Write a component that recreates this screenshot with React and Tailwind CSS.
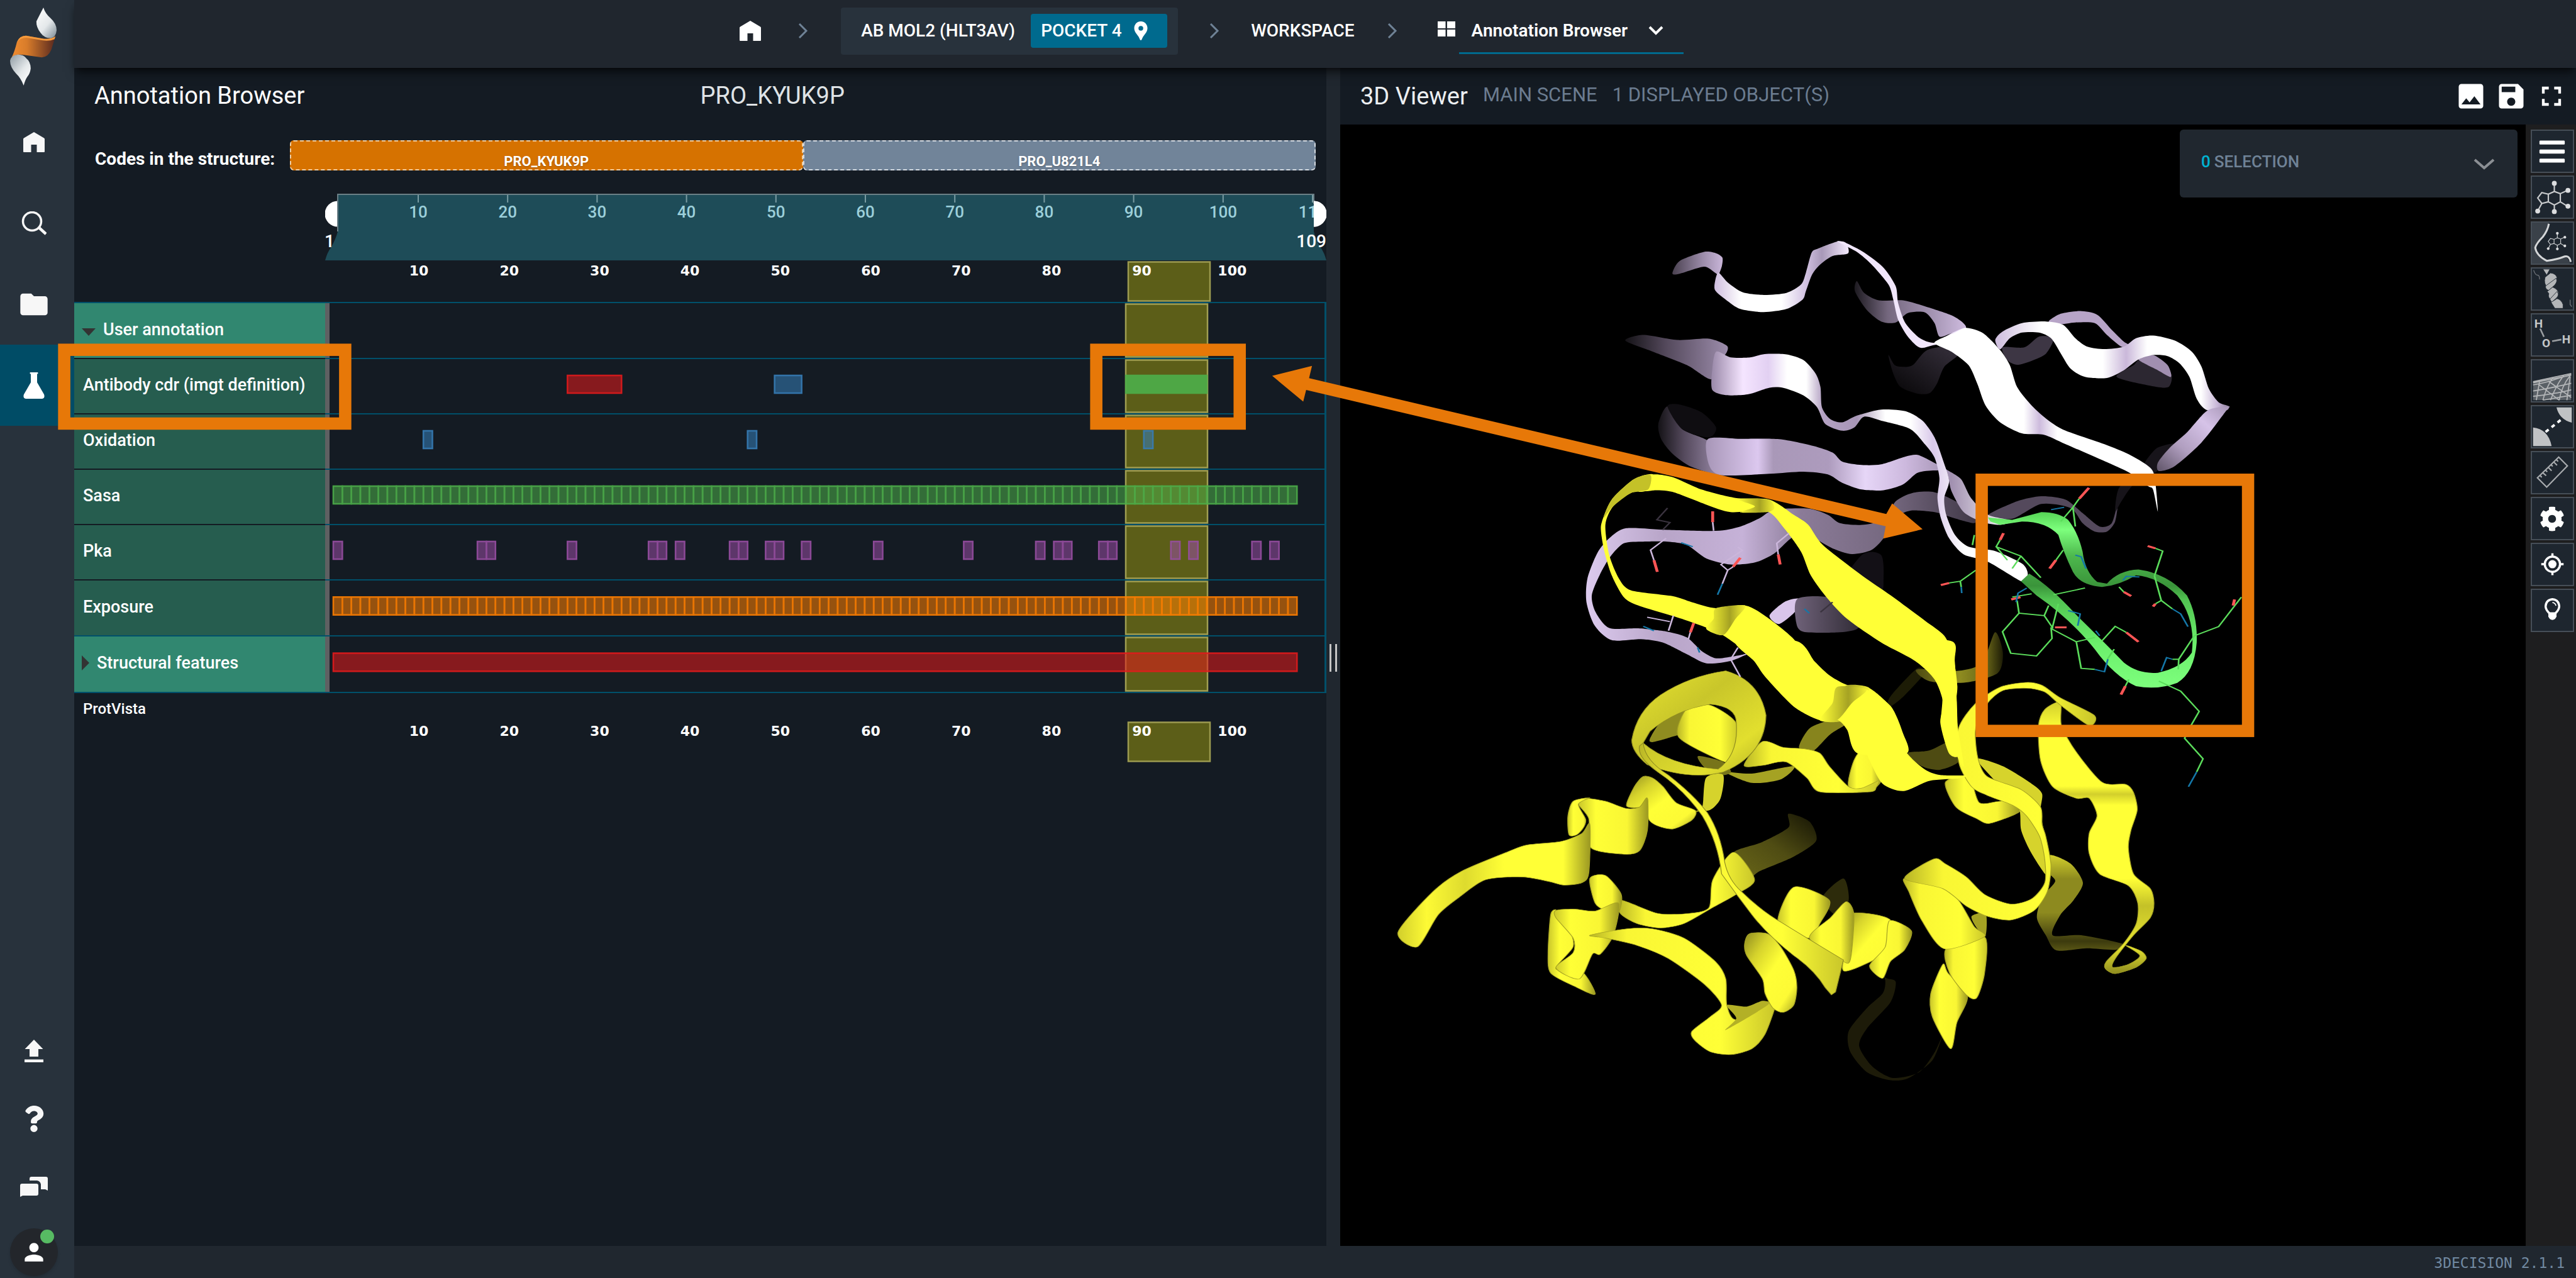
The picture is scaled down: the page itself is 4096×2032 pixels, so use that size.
import React, { useState } from 'react';
import { MdFolder, MdImage, MdSave, MdFullscreen, MdPerson, MdLocationPin } from 'react-icons/md';
import { FaBars, FaCog, FaQuestion } from 'react-icons/fa';

const RES = 14.32;
const residues = Array.from({ length: 107 }, (_, i) => [i, i + 1]);
const single = (list) => list.map((i) => [i, i + 1]);

const tracks = [
  { label: 'User annotation', group: true, open: true, height: 'h-[89px]', features: [] },
  {
    label: 'Antibody cdr (imgt definition)',
    height: 'h-[88px]',
    features: [
      { color: '#e41a1c', spans: [[26, 32]] },
      { color: '#377eb8', spans: [[49, 52]] },
      { color: '#4daf4a', spans: [[88, 97]], solid: true },
    ],
  },
  { label: 'Oxidation', height: 'h-[88px]', features: [{ color: '#377eb8', spans: single([10, 46, 90]) }] },
  { label: 'Sasa', height: 'h-[88px]', features: [{ color: '#4daf4a', spans: residues }] },
  {
    label: 'Pka',
    height: 'h-[88px]',
    features: [
      {
        color: '#984ea3',
        spans: single([0, 16, 17, 26, 35, 36, 38, 44, 45, 48, 49, 52, 60, 70, 78, 80, 81, 85, 86, 93, 95, 102, 104]),
      },
    ],
  },
  { label: 'Exposure', height: 'h-[89px]', features: [{ color: '#ff7f00', spans: residues }] },
  { label: 'Structural features', group: true, height: 'h-[90px]', features: [{ color: '#e41a1c', spans: [[0, 107]] }] },
];

// closed smooth outline through a list of points
const smooth = (str) => {
  const n = str.trim().split(/[\s,]+/).map(Number);
  const p = [];
  for (let i = 0; i < n.length; i += 2) p.push([n[i], n[i + 1]]);
  const at = (i) => p[(i + p.length) % p.length];
  const k = 0.13;
  let d = `M${p[0][0]} ${p[0][1]}`;
  for (let i = 0; i < p.length; i++) {
    const [a, b, c, e] = [at(i - 1), at(i), at(i + 1), at(i + 2)];
    d += `C${b[0] + (c[0] - a[0]) * k} ${b[1] + (c[1] - a[1]) * k} ${c[0] - (e[0] - b[0]) * k} ${c[1] - (e[1] - b[1]) * k} ${c[0]} ${c[1]}`;
  }
  return d + 'Z';
};

const lilacRibbons = [
  ['690,175 705,210 735,232 785,232 830,250 890,280 915,312 885,330 860,340 850,300 830,268 795,270 770,298 740,295 710,260 686,205', 'url(#lilacFade)'],
  ['755,395 768,425 785,430 805,425 835,380 885,368 900,392 870,430 855,480 840,508 815,510 780,490 765,450', 'url(#lilacBlack)'],
  ['990,372 1035,372 1065,340 1095,345 1080,390 1050,412 1020,424 1000,410', '#3d3644'],
  ['1225,460 1260,425 1275,410 1335,445 1332,490 1290,485', '#2c2731'],
  ['1270,408 1300,395 1330,425 1337,460 1310,440', '#a18fb0'],
  ['1085,295 1110,272 1150,264 1185,275 1215,320 1240,355 1255,368 1235,370 1205,335 1180,300 1140,298 1105,304', '#b7a4c7'],
  ['960,872 1020,830 1070,815 1120,825 1155,865 1190,905 1215,895 1228,830 1222,890 1205,920 1180,920 1155,895 1130,850 1070,838 1010,882', '#54495c'],
  ['1222,860 1230,790 1270,740 1290,700 1310,670 1345,660 1320,720 1300,750 1260,780 1235,830', '#17141a'],
  ['700,990 740,990 745,1060 735,1110 650,1130 640,1110', '#131016'],
  ['510,1170 540,1130 570,1120 565,1155 530,1195', '#d9c5ea'],
  ['568,1120 640,1118 700,1180 690,1210 650,1220 580,1218 565,1190', 'url(#lilacDeep)'],
  ['180,940 215,910 300,915 400,918 450,905 490,880 520,855 590,852 630,870 655,895 700,900 745,885 770,830 805,805 850,803 900,835 935,880 930,895 890,880 850,862 800,858 770,880 745,940 720,975 680,987 640,970 600,940 560,935 520,985 480,1012 430,1018 380,1000 340,960 300,950 250,950 210,955 182,995 160,1050 144,1110 152,1160 180,1207 240,1208 300,1218 340,1235 370,1275 400,1297 440,1290 462,1285 430,1305 380,1312 340,1285 290,1250 245,1240 185,1243 150,1200 133,1130 135,1060 155,985', 'url(#lilacMid)'],
  ['300,548 330,615 383,650 390,700 412,752 350,728 310,688 287,645 281,600', 'url(#lilacDark)'],
  ['300,548 325,542 370,565 400,610 385,640 330,615', '#0f0d11'],
  ['383,645 450,644 530,645 600,665 640,685 660,712 700,722 740,720 790,697 815,692 845,712 880,740 905,765 925,820 960,870 1010,888 985,900 950,892 910,862 885,800 875,745 850,738 815,745 785,780 745,797 700,795 660,775 630,750 580,742 510,748 410,752 385,720', 'url(#lilacBar)'],
  ['213,352 250,335 320,350 385,346 423,368 418,395 400,405 390,467 340,425 270,385', 'url(#lilacDark)'],
  ['400,385 430,402 470,402 500,392 545,393 580,410 605,450 615,490 618,550 635,585 660,595 690,575 740,557 790,562 825,590 850,640 868,710 880,770 870,820 874,870 892,930 920,965 975,978 1030,1015 1042,1045 1032,1070 960,1010 910,988 880,940 863,880 856,820 860,760 850,700 830,660 800,615 745,592 705,578 685,610 660,620 625,600 608,550 580,515 540,493 510,492 465,512 420,514 392,498 392,440', 'url(#whiteA)'],
  ['310,152 325,115 375,88 400,92 413,105 412,130 405,155 398,150 375,132 325,153', 'url(#lilacDark2)'],
  ['405,150 425,180 455,208 498,216 545,210 575,185 585,150 597,90 610,78 650,57 668,62 672,92 640,100 615,125 598,155 585,205 578,230 545,258 498,267 450,258 420,230 398,202 398,175', 'url(#whiteB)'],
  ['650,57 668,62 705,90 745,135 770,190 775,240 790,300 820,345 850,358 885,330 915,314 905,350 850,365 820,373 795,340 775,290 765,230 755,185 720,125 690,88', '#f1e6fb'],
  ['850,358 890,330 915,314 950,330 985,380 1005,425 1020,490 1050,545 1085,590 1120,620 1200,660 1250,690 1290,725 1303,755 1310,860 1300,795 1290,785 1255,748 1215,720 1120,660 1075,632 1030,628 985,595 955,545 938,480 920,425 885,385', 'url(#whiteC)'],
  ['975,350 990,325 1030,300 1080,295 1115,305 1140,345 1165,370 1200,377 1240,370 1265,345 1300,337 1345,352 1380,385 1400,430 1415,495 1435,535 1456,547 1450,560 1410,558 1390,525 1375,460 1355,420 1330,398 1300,395 1270,408 1240,440 1205,463 1160,460 1130,435 1110,390 1090,345 1065,328 1030,328 1005,345 985,378', 'url(#whiteD)'],
  ['1456,548 1450,562 1400,655 1345,725 1312,740 1310,715 1335,670 1370,625 1412,560', 'url(#lilacTurn)'],
];

const yellowUpper = [
  ['240,800 265,752 310,758 370,795 440,820 510,825 560,870 590,900 620,960 700,1050 760,1110 830,1185 870,1230 888,1290 897,1380 893,1450 902,1580 880,1580 862,1490 868,1430 850,1360 810,1305 740,1250 670,1180 630,1120 595,1050 575,980 540,910 505,860 430,862 380,840 310,802 270,797', '#ffff36'],
  ['270,750 230,765 185,825 165,890 163,920 170,980 185,1050 210,1115 240,1140 330,1180 410,1225 470,1290 500,1350 560,1440 615,1478 650,1480 670,1510 692,1580 792,1580 785,1520 760,1440 710,1390 660,1380 610,1340 560,1240 500,1170 460,1140 400,1148 350,1130 310,1112 225,1095 200,1060 180,990 172,900 188,845 225,805 275,795', '#ffff36'],
];

const yellowUpperShade = [
  ['445,824 508,825 520,850 505,862 450,863 480,845', 'url(#yFold)'],
  ['400,1148 460,1140 440,1180 415,1228 380,1210 395,1180', 'url(#yFold)'],
  ['650,1382 710,1390 680,1430 650,1480 615,1478 640,1430', 'url(#yFold)'],
  ['265,752 230,765 185,825 168,880 188,845 225,805 260,795', '#c4c128'],
];

const yellowLower = [
  ['980,220 985,180 1035,85 1050,100 1010,180', '#1d1c06'],
  ['1035,88 1115,92 1160,65 1185,-40 1200,30 1190,100 1130,132 1060,128', 'url(#oliveUp)'],
  ['1018,375 1060,365 1118,320 1118,400 1080,432 1045,420', '#4e4b12'],
  ['790,583 830,610 843,675 800,730 735,780 715,805 690,780 685,715 740,680 790,630', 'url(#oliveFade)'],
  ['895,805 905,880 880,930 855,870', '#2d2b0b'],
  ['965,1110 975,1145 995,1160 985,1230 940,1320 925,1380 950,1450 990,1490 1040,1470 1070,1400 1085,1340 1065,1430 1020,1490 985,1498 940,1470 908,1400 905,1330 940,1250 970,1200 975,1155', '#1d1b09'],
  ['1290,725 1330,755 1353,820 1335,880 1310,930 1295,1000 1350,1000 1430,1030 1415,1050 1360,1045 1302,1052 1282,1000 1265,940 1275,870 1300,815 1285,780', 'url(#oliveDown)'],
  ['1090,475 1110,560 1150,600 1175,616 1232,575 1200,540 1155,545 1135,455', 'url(#yEdge)'],
  ['1150,395 1200,420 1255,480 1275,515 1272,580 1285,700 1287,800 1255,720 1235,640 1230,560 1190,480', '#d6d32c'],
  ['810,355 830,290 870,262 905,268 870,310 835,370', '#87841d'],
  ['670,440 720,445 800,420 775,465 720,477', '#a5a223'],
  ['617,385 665,405 680,440 660,450 630,425', '#77741a'],
  ['905,490 915,400 935,355 950,400 968,465 945,505', 'url(#yEdge)'],
  ['740,335 780,355 820,360 850,375 868,420 905,490 930,495 962,470 958,492 945,508 850,508 825,460 785,405 740,417 705,417', 'url(#yGlow)'],
  ['665,450 660,530 640,570 608,575 625,560 632,460', '#d6d32c'],
  ['480,555 495,490 512,455 530,460 550,490 575,545 612,572 605,605 570,635 540,625 522,600 520,530 505,560', 'url(#yCoil)'],
  ['400,530 440,540 480,565 505,560 520,530 520,640 505,710 475,722 412,700 408,600 388,550', 'url(#yEdge)'],
  ['370,655 368,590 378,540 410,528 388,550 402,602 398,630 385,655', 'url(#yEdge)'],
  ['43,990 80,1040 120,930 160,870 210,810 280,800 330,815 360,828 395,820 408,785 410,620 395,650 355,678 290,690 255,712 165,780 110,850', 'url(#yTail)'],
  ['525,325 550,260 605,218 590,300 565,320 530,337', '#8f8c20'],
  ['580,320 597,218 640,210 690,272 692,390 672,408', 'url(#yGlow)'],
  ['685,715 725,810 690,860 645,905 590,960 545,975 500,960 468,925 470,880 540,925 600,925 638,905 645,810', 'url(#yGlow)'],
  ['410,805 440,795 470,860 465,920 440,915 420,890', 'url(#yEdge)'],
  ['345,912 335,930 330,1060 335,1130 380,1175 420,1203 395,1125 345,1115 378,1040 370,980 345,930', 'url(#yEdge)'],
  ['345,915 380,910 420,917 465,890 455,1000 430,1065 415,1065 390,1150 345,1112 378,1060 378,1010 345,940', 'url(#yEdge)'],
  ['410,1000 480,978 530,978 590,1010 650,1090 670,1150 672,1240 690,1290 755,1225 765,1240 745,1340 720,1390 680,1410 640,1400 610,1360 605,1330 640,1280 662,1240 630,1170 560,1080 500,1035 440,1010', 'url(#yGlow)'],
  ['672,1240 690,1285 670,1325 750,1240 740,1225 710,1245', '#b3b026'],
  ['715,995 750,995 775,1040 800,1120 806,1180 800,1240 780,1265 760,1250 745,1200 740,1150 710,1070 706,1030', 'url(#yCoil)'],
  ['800,835 868,880 850,960 830,1010 770,960', 'url(#yEdge)'],
  ['912,925 985,948 978,1060 960,1080 895,1122 905,1000', 'url(#yCoil)'],
  ['983,950 1025,985 1012,1050 985,1090 970,1148 945,1105 975,1040', 'url(#yEdge)'],
  ['830,1010 870,940 900,885 915,930 908,1085 890,1085', 'url(#yEdge)'],
  ['1310,200 1280,225 1268,280 1272,400 1295,490 1340,530 1365,530 1380,590 1365,650 1365,720 1385,790 1440,830 1458,890 1455,960 1430,1030 1398,1090 1396,1115 1415,1132 1455,1110 1474,1080 1465,1055 1435,1035 1462,1070 1440,1100 1410,1110 1415,1080 1450,1000 1482,940 1489,890 1482,840 1450,790 1440,700 1445,640 1457,570 1450,510 1435,482 1390,475 1340,370 1312,280', 'url(#yArrow)'],
  ['1085,1100 1062,1200 1065,1280 1100,1390 1112,1300 1132,1210 1095,1130', 'url(#yEdge)'],
  ['1140,935 1167,925 1167,1000 1150,975', '#a5a223'],
  ['1092,1045 1165,1006 1165,1130 1150,1215 1130,1205 1098,1130', 'url(#yGlow)'],
  ['1012,805 1020,850 1045,950 1088,1047 1165,1005 1145,970 1115,880 1080,835', 'url(#yGlow)'],
  ['1375,245 1310,185 1275,142 1245,132 1195,148 1147,205 1115,290 1116,410 1140,490 1170,520 1220,555 1245,590 1270,660 1280,740 1280,820 1255,875 1215,893 1165,860 1130,800 1090,755 1068,738 1012,805 1085,840 1130,900 1170,935 1215,948 1260,915 1285,850 1292,760 1282,660 1275,620 1272,560 1235,500 1170,455 1152,390 1148,290 1170,205 1200,160 1245,152 1280,165 1310,210 1365,280', 'url(#yGlow)'],
  ['985,-10 1101,-10 1108,60 1112,200 1114,290 1125,420 1105,360 1082,280 1083,160 1045,60', '#ffff36'],
  ['690,-10 805,-10 840,60 870,110 905,143 945,152 985,215 1000,280 1015,370 1050,430 1080,450 1130,452 1115,462 1060,470 1010,505 970,480 945,400 925,310 895,265 850,262 800,215 760,130 725,60', '#ffff36'],
  ['900,143 945,152 912,215 892,265 850,262 880,210', 'url(#yFold)'],
];

const ring =
  'M670 92Q735 125 747 245Q745 380 665 440Q600 470 520 415Q490 370 490 330Q500 230 545 175Q600 110 670 92ZM690 270Q690 215 640 207Q575 225 525 300L512 340Q560 415 655 430Q695 380 690 270Z';

const greenRibbon =
  'M960 878L1010 885L1070 862Q1105 862 1125 885Q1145 920 1155 980Q1160 1040 1185 1070L1205 1075Q1230 1035 1270 1033Q1330 1045 1370 1110Q1392 1170 1390 1250Q1385 1340 1350 1370Q1310 1392 1265 1380Q1220 1350 1180 1270Q1130 1180 1060 1110L1028 1068L1045 1045Q1090 1085 1140 1165Q1200 1250 1240 1310Q1270 1345 1310 1340Q1360 1325 1380 1280Q1388 1180 1350 1110Q1310 1055 1265 1050Q1230 1080 1195 1085Q1150 1080 1135 1040Q1115 980 1105 930Q1080 890 1030 890L985 900L965 890Z';

const sticks = [
  ['#5bdc5b', '1148,822 1135,848 1110,890M1135,848 1140,905M985,945 977,965 1028,993 1069,1057M1028,993 1010,1030M977,965 1000,1005M935,1035 903,1068 880,1073M903,1068 905,1085M932,930 928,960M1115,975 1100,1005M1020,1125 1024,1163 1076,1170 1094,1208M1024,1163 990,1218 1007,1282 1060,1290 1092,1238 1090,1205M1105,1135 1092,1210 1142,1248 1152,1327 1180,1330M1142,1248 1180,1235M1076,1170 1085,1140M1195,1245 1222,1202 1245,1220M1303,1052 1320,978 1305,970M1303,1052 1317,1125 1340,1150M1317,1125 1305,1135M1095,1108 1160,1088M1010,1115 1050,1105M1230,1085 1240,1100M1482,1115 1435,1203 1385,1230 1353,1300 1340,1300M1353,1300 1352,1330M1250,1360 1243,1380M1312,1365 1357,1395 1395,1455 1375,1505 1365,1535 1403,1596 1390,1635M1206,1300 1220,1270'],
  ['#ff5555', '1168,790 1148,822M992,925 985,945M880,1073 863,1079M1100,1005 1087,1030M1305,970 1289,963M1305,1135 1300,1143M1027,1115 1008,1122M1122,1205 1098,1205M1245,1220 1270,1248M1240,1100 1255,1112M1243,1380 1234,1405M1465,1140 1468,1122M272,1005 279,1040M393,860 393,892M450,998 435,1025M528,988 532,1018M354,1192 347,1220'],
  ['#1477a8', '1090,855 1117,848M905,1085 906,1103M1140,990 1152,995 1162,1030M1238,1065 1245,1053 1272,1055M1340,1150 1357,1165 1372,1203M1340,1300 1328,1295 1317,1335M1180,1330 1200,1337 1207,1300M1125,1155 1150,1165 1145,1200M1018,1130 1022,1103 1040,1088M413,1075 403,1108M328,953 352,965M250,1202 272,1215M582,1150 592,1163M362,1265 366,1280M1182,1215 1190,1230M1390,1635 1373,1679'],
  ['#cbb6db', '430,1300 450,1352M430,1300 445,1265M430,1300 462,1285M413,1075 424,1035 410,1018 454,976 445,966M424,1035 435,1025M272,1005 265,975 297,940M393,892 395,917M528,988 525,955 550,925M302,1215 312,1170M258,1175 305,1188M347,1220 343,1240'],
  ['#3a333f', '300,850 278,885 305,893 290,915M640,1130 615,1160'],
];

const HomeGlyph = ({ className }) => (
  <svg viewBox="0 0 34 32" className={className} fill="currentColor">
    <path d="M17 0 33 9.500Q34 10 34 11V31Q34 32 33 32H21.500V20H12.500V32H1Q0 32 0 31V11Q0 10 1 9.500Z" />
  </svg>
);

const Chevron = () => (
  <svg viewBox="0 0 16 24" className="h-6 w-4" fill="none" stroke="#6f8296" strokeWidth="3">
    <path d="M2 1 13 12 2 23" />
  </svg>
);

const Logo = () => (
  <svg viewBox="0 0 205 282" className="h-[124px] w-[74px]" preserveAspectRatio="none">
    <defs>
      <linearGradient id="lgOrange">
        <stop offset="0" stopColor="#f08c30" />
        <stop offset="0.35" stopColor="#d87c2a" />
        <stop offset="1" stopColor="#57281f" />
      </linearGradient>
      <linearGradient id="lgTop" x1="0" y1="0" x2="0.8" y2="1">
        <stop offset="0" stopColor="#fff" />
        <stop offset="0.6" stopColor="#e4e8ea" />
        <stop offset="1" stopColor="#8e9ba3" />
      </linearGradient>
      <linearGradient id="lgBottom" x1="0" y1="0" x2="0.8" y2="1">
        <stop offset="0" stopColor="#8e9ba3" />
        <stop offset="0.6" stopColor="#e4e8ea" />
        <stop offset="1" stopColor="#fff" />
      </linearGradient>
    </defs>
    <path d="M6 182Q20 160 30 125Q42 102 70 102L150 113Q180 115 200 104Q190 130 182 152Q168 180 140 180L60 171Q25 166 6 182Z" fill="url(#lgOrange)" />
    <path d="M30 125Q42 102 70 102L150 113Q180 115 200 104L196 114Q175 122 145 119L72 109Q46 109 30 125Z" fill="#f59a3c" />
    <path d="M147 0Q155 22 178 38Q205 58 205 82Q202 108 180 111Q150 110 135 92Q115 72 116 50Q125 35 147 0Z" fill="url(#lgTop)" />
    <path d="M60 282Q48 255 26 238Q0 215 0 192Q5 172 35 170Q60 170 72 184Q90 195 91 220Q88 240 76 250Q66 262 60 282Z" fill="url(#lgBottom)" />
  </svg>
);

const sideItems = [
  { name: 'Home', icon: <HomeGlyph className="h-8 w-[34px]" /> },
  {
    name: 'Search',
    icon: (
      <svg viewBox="0 0 40 38" className="h-[38px] w-10" fill="none" stroke="currentColor" strokeWidth="3.500">
        <circle cx="17" cy="16" r="14.500" />
        <path d="M27 25 39 36" strokeWidth="4.500" />
      </svg>
    ),
  },
  { name: 'Projects', icon: <MdFolder className="size-[52px]" /> },
  {
    name: 'Workspace',
    active: true,
    icon: (
      <svg viewBox="0 0 34 42" className="h-[42px] w-[34px]" fill="currentColor">
        <path d="M11 0H23Q24 1 23 2.500H22V16L33 35Q35 41 30 42H4Q-1 41 1 35L12 16V2.500H11Q10 1 11 0Z" />
      </svg>
    ),
  },
];

const bottomItems = [
  {
    name: 'Upload',
    icon: (
      <svg viewBox="0 0 30 36" className="h-9 w-[30px]" fill="currentColor">
        <path d="M15 0 29.500 15H22V27H8V15H0.500ZM0 31.500H30V36H0Z" />
      </svg>
    ),
  },
  { name: 'Help', icon: <FaQuestion className="size-[42px]" /> },
  {
    name: 'Chat',
    icon: (
      <svg viewBox="0 0 44 32" className="h-8 w-11" fill="currentColor">
        <path d="M3 11H26Q29 11 29 14V27Q29 30 26 30H4L0 32V14Q0 11 3 11Z" />
        <path d="M15 6V3Q15 0 18 0H41Q44 0 44 3V22L40 20H33V12Q32 7 27 6Z" />
      </svg>
    ),
  },
];

function Sidebar() {
  return (
    <aside className="flex w-[118px] shrink-0 flex-col bg-[#28323c] text-[#f7f7f7]">
      <div className="flex h-[161px] pl-4 pt-3">
        <Logo />
      </div>
      <nav className="flex flex-col">
        {sideItems.map((item) => (
          <button
            key={item.name}
            aria-label={item.name}
            className={`flex h-[129px] items-center justify-center pr-2.5 ${item.active ? 'bg-[#004c66] text-white' : ''}`}
          >
            {item.icon}
          </button>
        ))}
      </nav>
      <div className="mt-auto flex flex-col">
        {bottomItems.map((item) => (
          <button key={item.name} aria-label={item.name} className="flex h-[108px] items-center justify-center pr-2.5">
            {item.icon}
          </button>
        ))}
        <div className="flex h-[91px] items-center pl-4 pt-2">
          <button
            aria-label="Account"
            className="relative flex size-[76px] items-center justify-center rounded-full bg-[#23262b] text-white shadow-md"
          >
            <MdPerson className="size-11" />
            <span className="absolute right-1.5 top-0.5 size-[22px] rounded-full bg-[#57bb63]" />
          </button>
        </div>
      </div>
    </aside>
  );
}

function TopBar() {
  return (
    <header className="relative z-10 flex h-[108px] shrink-0 items-center bg-[#20262e] pb-2.5 pl-[26.6%] text-[28px] leading-9 font-medium text-white shadow-lg shadow-black/60">
      <a href="#home" aria-label="Home">
        <HomeGlyph className="h-[34px] w-[34px]" />
      </a>
      <div className="ml-[59px]">
        <Chevron />
      </div>
      <div className="ml-[52px] flex h-[75px] w-[536px] items-center justify-between rounded bg-[#28323c] pl-8 pr-[17px]">
        <span>AB MOL2 (HLT3AV)</span>
        <button className="flex h-[54px] w-[217px] items-center justify-between rounded bg-[#006a8e] pl-4 pr-7">
          POCKET 4
          <MdLocationPin className="-mr-1 size-9" />
        </button>
      </div>
      <div className="ml-[50px]">
        <Chevron />
      </div>
      <a href="#workspace" className="ml-[50px]">
        WORKSPACE
      </a>
      <div className="ml-[52px]">
        <Chevron />
      </div>
      <svg viewBox="0 0 28 24" className="mb-1.5 ml-16 h-6 w-7" fill="#fff">
        <path d="M0 0H12.500V11H0ZM15 0H28V11H15ZM0 13H12.500V24H0ZM15 13H28V24H15Z" />
      </svg>
      <button className="ml-1.5 mt-2.5 flex h-16 w-[357px] items-center justify-between border-b-[3px] border-[#006a8e] pb-2 pl-5 pr-8 font-semibold">
        Annotation Browser
        <svg viewBox="0 0 24 16" className="h-4 w-6" fill="none" stroke="#fff" strokeWidth="4">
          <path d="M2 2 12 12 22 2" />
        </svg>
      </button>
    </header>
  );
}

function Navigator() {
  const ticks = [10, 20, 30, 40, 50, 60, 70, 80, 90, 100, 110];
  return (
    <svg viewBox="0 0 1592 106" className="block h-auto w-full">
      <clipPath id="navClip">
        <rect x="20" y="0" width="1552" height="60" />
      </clipPath>
      <circle cx="20" cy="32" r="20.500" fill="#fff" />
      <circle cx="1572" cy="32" r="20.500" fill="#fff" />
      <path d="M20 0H1572V60Q1575 72 1582 84Q1589 94 1592 106H0Q3 94 10 84Q17 72 20 60Z" fill="#1e4c58" />
      <path d="M20 60V1H1572V16" fill="none" stroke="#6b7f86" strokeWidth="2" />
      <g clipPath="url(#navClip)" textAnchor="middle" className="fill-[#9ccfda] text-[26px] font-medium">
        {ticks.map((t) => (
          <g key={t}>
            <path d={`M${148 + (t - 10) * 14.22} 2V14`} stroke="#7a9ca3" strokeWidth="2" />
            <text x={148 + (t - 10) * 14.22} y="38">
              {t}
            </text>
          </g>
        ))}
      </g>
      <path d="M1572 11.500A20.500 20.500 0 0 1 1572 52.500Z" fill="#fff" />
      <text x="-1" y="85" className="fill-white text-[28px] font-medium">
        1
      </text>
      <text x="1592" y="85" textAnchor="end" className="fill-white text-[28px] font-medium">
        109
      </text>
    </svg>
  );
}

function Ruler() {
  return (
    <svg viewBox="0 0 1592 66" className="block h-auto w-full">
      <rect x="1277" y="2.500" width="130" height="62" fill="#5c5e18" stroke="#9c9b50" strokeWidth="2.500" />
      <g textAnchor="middle" className="fill-white font-['DejaVu_Sans'] text-[22px] font-bold">
        {[10, 20, 30, 40, 50, 60, 70, 80, 90, 100].map((t) => (
          <text key={t} x={149 + (t - 10) * 14.37} y="24">
            {t}
          </text>
        ))}
      </g>
    </svg>
  );
}

function Track({ track }) {
  const { label, group, open, height, features } = track;
  return (
    <div className={`flex ${height}`}>
      <div
        className={`flex w-[399px] shrink-0 items-center border-t-2 pb-1 text-[27px] font-medium text-white ${
          group ? 'border-[#00506a] bg-[#318770] pl-3' : 'border-[#141b23] bg-[#265d4f] pl-3.5'
        }`}
      >
        {group && (
          <button aria-label={`Toggle ${label}`} className="mr-3 text-[#333]">
            {open ? (
              <svg viewBox="0 0 22 12" className="mt-2 h-3 w-[22px]" fill="currentColor">
                <path d="M0 0H22L11 12Z" />
              </svg>
            ) : (
              <svg viewBox="0 0 12 24" className="h-6 w-3" fill="currentColor">
                <path d="M0 0 12 12 0 24Z" />
              </svg>
            )}
          </button>
        )}
        <span>{label}</span>
      </div>
      <div className="w-[7px] shrink-0 border-t-2 border-[#00506a] bg-[#5f6062]" />
      <div className="min-w-0 flex-1 border-t-2 border-[#00506a]">
        <svg viewBox="0 0 1582 86" preserveAspectRatio="none" className="block h-full w-full">
          <rect x="1266" y="1.500" width="130" height="83" fill="#5c5e18" stroke="#a09f52" strokeWidth="2.500" />
          {features.map((f) => (
            <g key={f.color} fill={f.color} stroke={f.color} strokeWidth="2.600" opacity="0.9">
              {f.spans.map(([a, b]) => (
                <rect
                  key={a}
                  x={6 + a * RES}
                  y="26"
                  width={(b - a) * RES}
                  height="28"
                  fillOpacity={f.solid ? 1 : 0.62}
                />
              ))}
            </g>
          ))}
        </svg>
      </div>
    </div>
  );
}

function AnnotationPanel() {
  return (
    <section className="min-w-0 bg-[#141b23] text-[28px] leading-9 text-white">
      <div className="grid h-[88px] grid-cols-2 items-center text-[38px]">
        <h2 className="pl-8">Annotation Browser</h2>
        <h2 className="text-[#dfe3e6]">PRO_KYUK9P</h2>
      </div>
      <div className="mt-[27px] flex items-end pl-[33px] pr-[17px]">
        <span className="w-[310px] shrink-0 font-bold">Codes in the structure:</span>
        <button className="flex h-12 flex-1 items-end justify-center rounded-md border-2 border-dashed border-[#f0cfa4] bg-[#d67200] text-[22px] leading-6 font-bold text-shadow-md">
          PRO_KYUK9P
        </button>
        <button className="flex h-12 flex-1 items-end justify-center rounded-md border-2 border-dashed border-[#d5dbe2] bg-[#718499] text-[22px] leading-6 font-bold text-shadow-md">
          PRO_U821L4
        </button>
      </div>
      <div className="mt-[37px] pl-[399px]">
        <Navigator />
        <Ruler />
      </div>
      <div className="border-b-2 border-r-[3px] border-[#00506a]">
        {tracks.map((t) => (
          <Track key={t.label} track={t} />
        ))}
      </div>
      <div className="flex h-11 items-center pl-3.5 pt-1.5 text-[24px] font-medium">ProtVista</div>
      <div className="pl-[399px]">
        <Ruler />
      </div>
    </section>
  );
}

const Stops = ({ list }) => list.map(([o, c]) => <stop key={o} offset={o} stopColor={c} />);

function Molecule() {
  return (
    <svg viewBox="2290 213 2024 1915" className="absolute inset-0 h-full w-full" role="img" aria-label="Main scene">
      <defs>
        <linearGradient id="lilacFade"><Stops list={[[0, '#1d1a20'], [0.3, '#75687f'], [0.7, '#a494b3'], [1, '#cfbcdf']]} /></linearGradient>
        <linearGradient id="lilacBlack" x1="0" y1="1" x2="1" y2="0"><Stops list={[[0, '#050405'], [1, '#37313d']]} /></linearGradient>
        <linearGradient id="lilacDeep"><Stops list={[[0, '#6f6279'], [1, '#2e2933']]} /></linearGradient>
        <linearGradient id="lilacDark"><Stops list={[[0, '#141216'], [0.4, '#54495c'], [1, '#9d8dac']]} /></linearGradient>
        <linearGradient id="lilacDark2"><Stops list={[[0, '#4a4150'], [0.6, '#9b8ba9'], [1, '#c9b6d9']]} /></linearGradient>
        <linearGradient id="lilacTurn" x1="0" y1="1" x2="1" y2="0"><Stops list={[[0, '#5f5468'], [0.35, '#b09ebf'], [0.7, '#d6c3e8'], [1, '#a796b6']]} /></linearGradient>
        <linearGradient id="lilacMid"><Stops list={[[0, '#dccaee'], [0.2, '#b8a5c8'], [0.4, '#c6b2d8'], [0.55, '#8b7b98'], [0.78, '#75687f'], [1, '#403847']]} /></linearGradient>
        <linearGradient id="lilacBar"><Stops list={[[0, '#a796b7'], [0.17, '#dcc8ef'], [0.22, '#a998b8'], [0.4, '#ad9bbd'], [0.52, '#e6d6f7'], [0.65, '#cdb9de'], [0.8, '#a190b0'], [1, '#fff']]} /></linearGradient>
        <linearGradient id="whiteA"><Stops list={[[0, '#9988a8'], [0.1, '#f5e5ff'], [0.18, '#e2d0f2'], [0.24, '#fff'], [0.3, '#fff'], [0.35, '#b5a3c4'], [0.46, '#a796b6'], [0.55, '#fff'], [0.63, '#fff'], [0.7, '#d9c9ea'], [0.8, '#fff'], [1, '#fff']]} /></linearGradient>
        <linearGradient id="whiteB"><Stops list={[[0, '#cfbedf'], [0.2, '#fff'], [0.5, '#fff'], [0.68, '#d2c2e2'], [0.8, '#a898b8'], [1, '#f4eafd']]} /></linearGradient>
        <linearGradient id="whiteC"><Stops list={[[0, '#fff'], [0.4, '#fff'], [0.47, '#cdbbdd'], [0.55, '#fff'], [1, '#fff']]} /></linearGradient>
        <linearGradient id="whiteD"><Stops list={[[0, '#cdbcdd'], [0.2, '#fff'], [0.46, '#fff'], [0.56, '#cab8da'], [0.65, '#fff'], [0.88, '#fff'], [0.95, '#c7b5d7'], [1, '#8f809c']]} /></linearGradient>
        <linearGradient id="oliveFade" x1="0" y1="1" x2="1" y2="0"><Stops list={[[0, '#6b6819'], [0.5, '#4f4c13'], [1, '#141304']]} /></linearGradient>
        <linearGradient id="oliveUp"><Stops list={[[0, '#4e4b12'], [0.5, '#8f8c20'], [0.8, '#6b6819'], [1, '#1d1c06']]} /></linearGradient>
        <linearGradient id="oliveDown" x1="0" y1="0" x2="0" y2="1"><Stops list={[[0, '#d2cf2c'], [0.25, '#8d8a1f'], [0.6, '#8d8a1f'], [0.9, '#3c3a0e'], [1, '#5a5715']]} /></linearGradient>
        <linearGradient id="yEdge"><Stops list={[[0, '#c9c62a'], [0.25, '#ffff36'], [0.7, '#f9f634'], [1, '#9b9822']]} /></linearGradient>
        <linearGradient id="yCoil" x1="0" y1="0" x2="1" y2="1"><Stops list={[[0, '#8f8c20'], [0.25, '#d6d32c'], [0.5, '#ffff36'], [0.8, '#fdfa35'], [1, '#a5a223']]} /></linearGradient>
        <linearGradient id="yFold"><Stops list={[[0, '#ffff36'], [0.45, '#bcb927'], [0.6, '#a5a223'], [1, '#f5f233']]} /></linearGradient>
        <linearGradient id="yGlow"><Stops list={[[0, '#b9b626'], [0.2, '#f9f634'], [0.7, '#ffff36'], [1, '#c9c62a']]} /></linearGradient>
        <linearGradient id="yTail"><Stops list={[[0, '#d2cf2c'], [0.15, '#fdfa35'], [0.35, '#dedb2e'], [0.55, '#ffff36'], [0.86, '#ffff36'], [1, '#9b9822']]} /></linearGradient>
        <linearGradient id="yArrow" x1="0" y1="0" x2="0" y2="1"><Stops list={[[0, '#d2cf2c'], [0.1, '#ffff36'], [0.31, '#ffff36'], [0.34, '#d2cf2c'], [0.38, '#ffff36'], [0.65, '#ffff36'], [0.75, '#c4c128'], [0.9, '#e8e530'], [1, '#8f8c20']]} /></linearGradient>
        <linearGradient id="yRing" x1="0" y1="0" x2="1" y2="1"><Stops list={[[0, '#e8e530'], [0.4, '#c9c62a'], [0.75, '#e2df2e'], [1, '#b3b026']]} /></linearGradient>
        <linearGradient id="green" x1="0" y1="0" x2="0" y2="1"><Stops list={[[0, '#55d455'], [0.1, '#7dff7d'], [0.25, '#4db84d'], [0.42, '#3a943a'], [0.5, '#52c452'], [0.75, '#6bef6b'], [1, '#7dff7d']]} /></linearGradient>
      </defs>
      <g transform="translate(2600 380) scale(0.8291 0.574)">
        {lilacRibbons.map(([pts, fill]) => (
          <path key={pts} d={smooth(pts)} fill={fill} />
        ))}
      </g>
      <g transform="translate(2350 1100) scale(0.8929 0.4974)" strokeWidth="1.500">
        {yellowLower.map(([pts, fill]) => (
          <path key={pts} d={smooth(pts)} fill={fill} stroke={fill.startsWith('url(#y') && fill !== 'url(#yFold)' ? '#a5a223' : 'none'} />
        ))}
        <path d={ring} fill="url(#yRing)" stroke="#8f8c20" fillRule="evenodd" />
        <path
          d="M512 340Q515 400 560 450Q610 520 635 580Q660 650 668 750Q675 810 700 850Q740 920 780 960Q830 1015 895 1085L880 1195L872 1205L860 1180Q840 1120 800 1070Q750 1000 720 930Q690 860 662 790Q655 680 625 590Q590 500 540 440Q500 390 505 350Z"
          fill="url(#yGlow)"
          stroke="#8f8c20"
        />
      </g>
      <g transform="translate(2600 380) scale(0.8291 0.574)">
        {yellowUpper.concat(yellowUpperShade).map(([pts, fill]) => (
          <path key={pts} d={smooth(pts)} fill={fill} />
        ))}
        <path d={greenRibbon} fill="url(#green)" />
        {sticks.map(([color, d]) => (
          <path
            key={color}
            d={'M' + d}
            fill="none"
            stroke={color}
            strokeWidth={color === '#ff5555' ? 6 : 3.500}
          />
        ))}
      </g>
    </svg>
  );
}

const MoleculeIcon = () => (
  <g>
    <path
      d="M41 27 52 31V46L41 52 30 46V32ZM30 32 18 29 10.500 39 18 49 30 46M41 27V13M52 31 65 25M52 46 65 54M41 52V64M18 49 10.500 63"
      fill="none"
      stroke="#c9cbcd"
      strokeWidth="2.500"
    />
    {[[41, 12], [66, 25], [66, 54], [41, 64], [10.5, 63]].map(([x, y]) => (
      <circle key={`${x}-${y}`} cx={x} cy={y} r="4.500" fill="#dcdddf" />
    ))}
  </g>
);

const tools = [
  { name: 'Menu', icon: <FaBars className="size-[46px]" /> },
  { name: 'Ligand', art: <MoleculeIcon /> },
  {
    name: 'Pocket',
    art: (
      <g>
        <path d="M0 0H31Q29 14 20 26Q8 38 6 46Q8 60 27 70Q45 68 63 62L70 75H0Z" fill="#3a4149" />
        <path d="M31 2Q29 14 20 26Q8 38 6 46Q8 60 27 70Q45 68 60 62Q69 60 71 72" fill="none" stroke="#d4d6d8" strokeWidth="3.500" />
        <g transform="translate(24 13) scale(0.55)">
          <MoleculeIcon />
        </g>
      </g>
    ),
  },
  {
    name: 'Helix',
    art: (
      <g fill="#b4b6b8" stroke="#1e262f" strokeWidth="1">
        <path d="M20 1H33L27 12Z" />
        <path d="M24 16 34 8Q44 9 46 17L28 34Q21 28 24 16Z" />
        <path d="M25 32 44 18Q48 22 42 30L31 40Q24 38 25 32Z" />
        <path d="M28 42 38 34Q48 38 49 46L37 58Q28 54 31 46Z" />
        <path d="M33 56 46 42Q51 48 45 54L36 62Z" />
        <path d="M35 62 46 55Q54 57 57 66V73H42Z" />
        <path d="M3 3Q6 12 10 12T14 20M70 57V66L73 70" fill="none" stroke="#73777c" strokeWidth="1.500" />
      </g>
    ),
  },
  {
    name: 'Water',
    art: (
      <g>
        <path d="M15 26 22 41M37 49 54 46" stroke="#9b9ea1" strokeWidth="3" />
        <g fill="#c4c6c8" textAnchor="middle" className="text-[22px] font-bold">
          <text x="12" y="24">H</text>
          <text x="26" y="60">O</text>
          <text x="63" y="53">H</text>
        </g>
      </g>
    ),
  },
  {
    name: 'Surface',
    art: (
      <g>
        <path d="M2 39 72 24V73H2Z" fill="#5a6066" />
        <path
          d="M2 39 72 24M2 41 72 27M2 45Q30 40 45 34L72 26M2 56Q30 52 72 42M2 66Q40 62 72 54M20 73 72 64M8 73 14 38M20 73Q26 50 38 32M34 73Q44 46 58 28M50 73Q54 48 70 28M64 73 70 30M12 44 50 73M30 38 72 68"
          fill="none"
          stroke="#b4b6b8"
          strokeWidth="2"
        />
      </g>
    ),
  },
  {
    name: 'Contacts',
    art: (
      <g>
        <path d="M45 2H73V30Q50 24 45 2ZM2 39Q30 42 36 73H2Z" fill="#c0c2c4" />
        <path d="M25 47 54 24" stroke="#fff" strokeWidth="4.500" strokeDasharray="7 7" />
      </g>
    ),
  },
  {
    name: 'Measure',
    art: (
      <path
        d="M10 47 49 9 65 25 27 64ZM15 43 18 46M20 38 26 43M25 33 28 36M30 28 36 34M35 23 38 26M40 18 46 24M45 14 48 17"
        fill="none"
        stroke="#a9acaf"
        strokeWidth="2.500"
      />
    ),
  },
  { name: 'Settings', icon: <FaCog className="size-10" /> },
  {
    name: 'Center',
    art: (
      <g fill="none" stroke="#fff">
        <circle cx="37.500" cy="37" r="14" strokeWidth="4" />
        <circle cx="37.500" cy="37" r="7.500" fill="#fff" stroke="none" />
        <path d="M37.500 17V23M37.500 51V57M17 37H23M52 37H58" strokeWidth="4" />
      </g>
    ),
  },
  {
    name: 'Tips',
    art: (
      <g>
        <path d="M32 43Q25 36 25 30Q26 18 37.500 17Q49 18 50 30Q50 36 43 43" fill="none" stroke="#fff" strokeWidth="4" />
        <path d="M37.500 23Q43 24 44 29" fill="none" stroke="#fff" strokeWidth="2" />
        <path d="M30 41H45V49Q42 55 37.500 55T30 49Z" fill="#fff" />
      </g>
    ),
  },
];

function Viewer() {
  const [open, setOpen] = useState(false);
  return (
    <section className="flex min-w-0 flex-col bg-[#141b23]">
      <div className="flex h-[90px] items-center pl-8 pr-[13px]">
        <h2 className="text-[38px] leading-10 text-[#eceff1]">3D Viewer</h2>
        <span className="mb-1 ml-6 text-[31px] leading-9 text-[#6b7c90]">MAIN SCENE</span>
        <span className="mb-1 ml-6 text-[31px] leading-9 text-[#6b7c90]">1 DISPLAYED OBJECT(S)</span>
        <div className="ml-auto flex gap-3 text-white">
          <button aria-label="Snapshot">
            <MdImage className="size-[52px]" />
          </button>
          <button aria-label="Save">
            <MdSave className="size-[52px]" />
          </button>
          <button aria-label="Fullscreen">
            <MdFullscreen className="size-[52px]" />
          </button>
        </div>
      </div>
      <div className="flex flex-1">
        <div className="relative flex-1 bg-black">
          <Molecule />
          <button
            onClick={() => setOpen(!open)}
            className="absolute right-[13px] top-2 flex h-[108px] w-[537px] items-center rounded-md bg-[#20272f] pb-1.5 pl-[34px] pr-9 text-[26px] font-medium text-[#6f8296]"
          >
            <span className="mr-1.5 text-[#00b3d1]">0</span>
            SELECTION
            <svg viewBox="0 0 34 18" className="ml-auto mt-2 h-[18px] w-[34px]" fill="none" stroke="#8b8f94" strokeWidth="4">
              <path d="M2 2 17 15 32 2" />
            </svg>
          </button>
        </div>
        <div className="flex w-20 flex-col items-center gap-1 bg-[#1e1e1f] pl-1 pt-2">
          {tools.map((tool) => (
            <button
              key={tool.name}
              aria-label={tool.name}
              className="flex size-[69px] items-center justify-center border-2 border-[#464e57] bg-[#1e262f] text-white"
            >
              {tool.icon || (
                <svg viewBox="0 0 75 75" className="size-full">
                  {tool.art}
                </svg>
              )}
            </button>
          ))}
        </div>
      </div>
    </section>
  );
}

// tutorial callouts drawn over the whole workspace
const Callouts = () => (
  <svg viewBox="0 0 4400 2183" className="pointer-events-none absolute inset-0 z-20 h-full w-full">
    <g fill="none" stroke="#e77808" strokeWidth="21">
      <rect x="109.500" y="597.500" width="480" height="126" />
      <rect x="1872.500" y="597.500" width="245" height="126" />
      <rect x="3385" y="819.500" width="455" height="429" />
    </g>
    <path d="M2173 642 2241 625 2236 646 3222 878 3232 860 3284 904 3217 920 3221 899 2231 666 2226 686Z" fill="#e77808" />
  </svg>
);

export default function App() {
  return (
    <div className="relative flex min-h-screen bg-[#20272f] font-['Roboto',sans-serif]">
      <Sidebar />
      <div className="flex min-w-0 flex-1 flex-col">
        <TopBar />
        <main className="grid flex-1 grid-cols-[1991fr_22px_1965fr]">
          <AnnotationPanel />
          <div className="flex justify-center gap-1.5 bg-[#20272f] pt-[916px]">
            <span className="h-11 w-[3px] bg-[#c5c5c5]" />
            <span className="h-11 w-[3px] bg-[#c5c5c5]" />
          </div>
          <Viewer />
        </main>
        <footer className="flex h-[51px] items-center justify-end bg-[#20272f] pr-[18px] pt-1 font-['DejaVu_Sans_Mono',monospace] text-[23px] text-[#7189a1]">
          3DECISION 2.1.1
        </footer>
      </div>
      <Callouts />
    </div>
  );
}
